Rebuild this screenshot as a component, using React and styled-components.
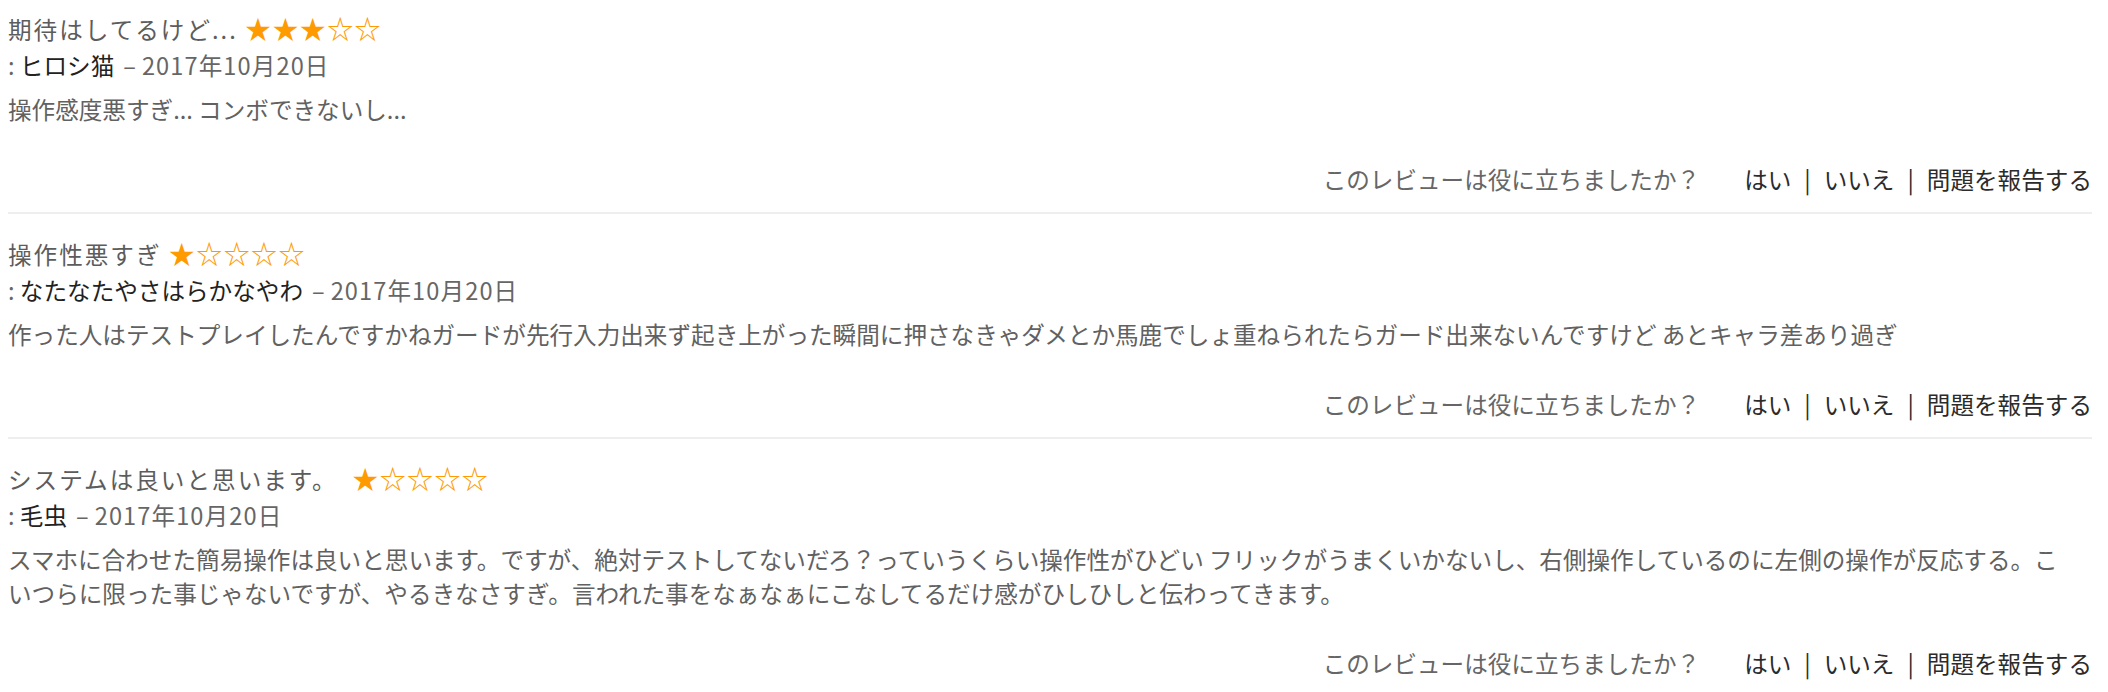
import styled, { createGlobalStyle } from "styled-components"

const GlobalStyle = createGlobalStyle`
    body {
        margin: 0;
        background: #fff;
        font-family: "Noto Sans CJK JP", "Noto Sans", sans-serif;
    }
`

const reviews = [
    {
        title: "期待はしてるけど...",
        rating: 3,
        name: "ヒロシ猫",
        date: "2017年10月20日",
        body: "操作感度悪すぎ... コンボできないし...",
    },
    {
        title: "操作性悪すぎ",
        rating: 1,
        name: "なたなたやさはらかなやわ",
        date: "2017年10月20日",
        body: "作った人はテストプレイしたんですかねガードが先行入力出来ず起き上がった瞬間に押さなきゃダメとか馬鹿でしょ重ねられたらガード出来ないんですけど あとキャラ差あり過ぎ",
    },
    {
        title: "システムは良いと思います。\u00a0",
        rating: 1,
        name: "毛虫",
        date: "2017年10月20日",
        body: "スマホに合わせた簡易操作は良いと思います。ですが、絶対テストしてないだろ？っていうくらい操作性がひどい フリックがうまくいかないし、右側操作しているのに左側の操作が反応する。こいつらに限った事じゃないですが、やるきなさすぎ。言われた事をなぁなぁにこなしてるだけ感がひしひしと伝わってきます。",
    },
]

const Stars = ({ rating }) => {
    let s = ""
    for (let i = 0; i < 5; i++) s += i < rating ? "★" : "☆"
    return <StyleStars>{s}</StyleStars>
}

const App = () => {
    return (
        <>
            <GlobalStyle />
            <StyleList>
                {reviews.map((r, i) => (
                    <StyleReview key={i}>
                        <StyleTitle>
                            {r.title} <Stars rating={r.rating} />
                        </StyleTitle>
                        <StyleMeta>
                            : <StyleName>{r.name}</StyleName>
                            <StyleDash>–</StyleDash>
                            <StyleDate>{r.date}</StyleDate>
                        </StyleMeta>
                        <StyleBody>{r.body}</StyleBody>
                        <StyleHelpful>
                            <StyleQuestion>このレビューは役に立ちましたか？</StyleQuestion>
                            <StyleLink>はい</StyleLink>
                            <StyleSep>|</StyleSep>
                            <StyleLink>いいえ</StyleLink>
                            <StyleSep>|</StyleSep>
                            <StyleLink>問題を報告する</StyleLink>
                        </StyleHelpful>
                    </StyleReview>
                ))}
            </StyleList>
        </>
    )
}

const StyleList = styled.div`
    padding: 0 16px 0 8px;
    font-size: 23.6px;
    color: #5e5e5e;
`

const StyleReview = styled.div`
    padding: 22px 0 15px;
    border-bottom: 2px solid #eeeeee;
    &:first-child {
        padding-top: 11px;
    }
    &:last-child {
        border-bottom: none;
    }
`

const StyleTitle = styled.div`
    height: 36px;
    line-height: 36px;
    letter-spacing: 2px;
    color: #5c5c5c;
    white-space: nowrap;
`

const StyleStars = styled.span`
    font-family: "Noto Sans CJK JP", sans-serif;
    font-size: 26px;
    line-height: 1;
    letter-spacing: 1.4px;
    color: #ff9a00;
`

const StyleMeta = styled.div`
    line-height: 36px;
    color: #666;
`

const StyleName = styled.span`
    color: #222;
`

const StyleDash = styled.span`
    margin: 0 6px 0 9px;
`

const StyleDate = styled.span`
    letter-spacing: 1.1px;
`

const StyleBody = styled.p`
    margin: 9px 0 0;
    padding-right: 12px;
    line-height: 34px;
    color: #616161;
`

const StyleHelpful = styled.div`
    display: flex;
    justify-content: flex-end;
    align-items: baseline;
    margin-top: 35px;
    line-height: 36px;
`

const StyleQuestion = styled.span`
    color: #666;
    margin-right: 44px;
`

const StyleLink = styled.a`
    color: #2b2b2b;
    cursor: pointer;
`

const StyleSep = styled.span`
    color: #2b2b2b;
    margin: 0 13px;
`

export default App
